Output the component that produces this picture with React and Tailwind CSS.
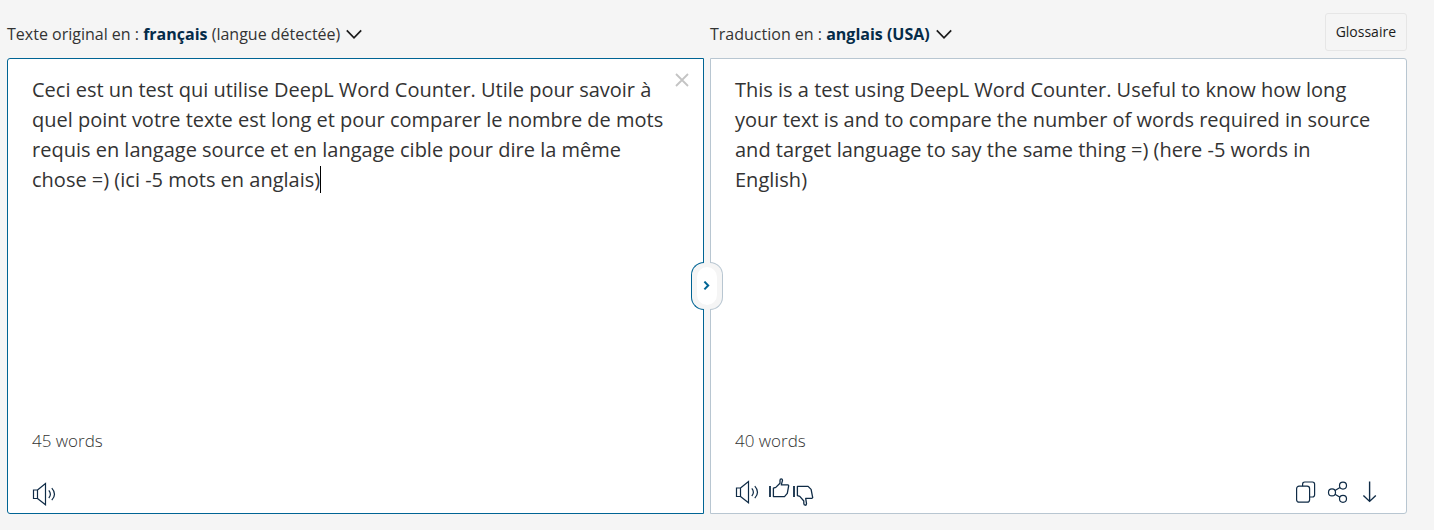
import { useState } from "react";

const SOURCE =
  "Ceci est un test qui utilise DeepL Word Counter. Utile pour savoir à quel point votre texte est long et pour comparer le nombre de mots requis en langage source et en langage cible pour dire la même chose =) (ici -5 mots en anglais)";
const TARGET =
  "This is a test using DeepL Word Counter. Useful to know how long your text is and to compare the number of words required in source and target language to say the same thing =) (here -5 words in English)";

function Icon({ children, className, viewBox = "0 0 24 24" }) {
  return (
    <svg
      className={className}
      viewBox={viewBox}
      fill="none"
      stroke="currentColor"
      strokeWidth="1.2"
      aria-hidden="true"
    >
      {children}
    </svg>
  );
}

function Chevron() {
  return (
    <Icon className="h-4 w-4" viewBox="0 0 16 16">
      <path d="M.8 4.3 8 11.8l7.2-7.5" stroke="#1b1b1b" strokeWidth="1.7" />
    </Icon>
  );
}

function Speaker() {
  return (
    <Icon className="h-6 w-6">
      <path d="M1.5 8h4v8.5h-4zM5.5 8l8-6.4v21.2l-8-6.3" />
      <path d="M16.8 8.4c2 2.4 2 5.2 0 7.6M19.8 6.2c3.4 3.8 3.4 8.2 0 12" />
    </Icon>
  );
}

function ThumbUp() {
  return (
    <Icon className="h-6 w-6 overflow-visible">
      <path d="M3 8v11" strokeWidth="1.8" />
      <path
        d="M6.4 18.6V10.2l2.4-.8 4.2-4.2V2.6c0-2.3 2.4-2.2 2.5-.2l-1.2 4.4h6.6l.8.8-1.4 7.8-2.8 3.2z"
        strokeWidth="1.3"
        strokeLinejoin="round"
      />
    </Icon>
  );
}

function ThumbDown() {
  return (
    <Icon className="h-6 w-6 overflow-visible">
      <path d="M3 6v11" strokeWidth="1.8" />
      <path
        d="M6.4 6.4v9.2l2.4.8 4 4.6v2.4c.2 2.4 2.6 2.4 2.7.2l-.8-5.2h6.2l.8-.8-1.6-8.2-3-3z"
        strokeWidth="1.3"
        strokeLinejoin="round"
      />
    </Icon>
  );
}

function Copy() {
  return (
    <Icon className="h-6 w-6">
      <rect x="2.6" y="6.2" width="13" height="16" rx="2.5" />
      <path d="M8.6 6.2V4.2c0-1.5.8-2.2 2.2-2.2h7.6c1.4 0 2.2.8 2.2 2.2v10.6c0 1.5-.8 2.2-2.2 2.2h-2.8" />
    </Icon>
  );
}

function Share() {
  return (
    <Icon className="h-6 w-6">
      <circle cx="6" cy="12.4" r="3.5" />
      <circle cx="17" cy="5.6" r="3.5" />
      <circle cx="17" cy="18.8" r="3.5" />
      <path d="m9 10.6 5-3.2M9 14.2l5 3" />
    </Icon>
  );
}

function Download() {
  return (
    <Icon className="h-6 w-6">
      <path d="M11.6 1.4v20M5.4 15.4l6.2 6 6.2-6" strokeWidth="1.4" />
    </Icon>
  );
}

function IconButton({ label, className = "", children }) {
  return (
    <button type="button" aria-label={label} className={`text-[#0f2b46] ${className}`}>
      {children}
    </button>
  );
}

function LanguageButton({ prefix, language, suffix }) {
  return (
    <button type="button" className="flex items-center gap-1.5 text-base text-[#333333]">
      <span>
        {prefix} <strong className="font-bold text-[#042b48]">{language}</strong>
        {suffix}
      </span>
      <Chevron />
    </button>
  );
}

const textClass =
  "block h-[362px] w-full resize-none bg-transparent pt-4 pr-8 pl-6 text-xl leading-[30px] text-[#333333] outline-none";

export default function App() {
  const [source, setSource] = useState(SOURCE);
  return (
    <main className="min-h-screen bg-[#f5f5f5] pt-2.5 pr-[27px] pb-4 pl-[7px] font-['Open_Sans',sans-serif]">
      <header className="grid h-12 grid-cols-2 gap-1.5">
        <LanguageButton
          prefix="Texte original en :"
          language="français"
          suffix=" (langue détectée)"
        />
        <div className="flex items-center justify-between">
          <LanguageButton prefix="Traduction en :" language="anglais (USA)" />
          <button
            type="button"
            className="mb-1 h-[38px] rounded-[3px] border border-[#e6e6e6] px-2.5 text-sm text-[#1b1b1b]"
          >
            Glossaire
          </button>
        </div>
      </header>

      <div className="relative grid grid-cols-2 gap-1.5">
        <section className="relative rounded-l-[3px] border border-[#006494] bg-white">
          <textarea
            aria-label="Texte original"
            spellCheck={false}
            value={source}
            onChange={(e) => setSource(e.target.value)}
            className={`${textClass} caret-transparent`}
          />
          {source === SOURCE && (
            <span className="absolute top-[107px] left-[312px] h-[27px] w-px bg-black" />
          )}
          <button
            type="button"
            aria-label="Effacer le texte"
            className="absolute top-[13px] right-[13px] text-[#c4c4c4]"
          >
            <Icon className="h-4 w-4" viewBox="0 0 16 16">
              <path d="m2 2 12 12M14 2 2 14" strokeWidth="1.8" />
            </Icon>
          </button>
          <footer className="px-6 pb-[7px]">
            <p className="h-10 text-[17px] leading-10 font-light text-[#333333]">45 words</p>
            <div className="flex h-[45px] items-end">
              <IconButton label="Écouter le texte original">
                <Speaker />
              </IconButton>
            </div>
          </footer>
        </section>

        <section className="rounded-r-[3px] border border-[#b8c6d1] bg-white">
          <textarea aria-label="Traduction" readOnly value={TARGET} className={textClass} />
          <footer className="px-6 pb-[9px]">
            <p className="h-10 text-[17px] leading-10 font-light text-[#333333]">40 words</p>
            <div className="flex h-[43px] items-end justify-between">
              <div className="flex items-end">
                <IconButton label="Écouter la traduction">
                  <Speaker />
                </IconButton>
                <IconButton label="Bonne traduction" className="ml-2 pb-0.5">
                  <ThumbUp />
                </IconButton>
                <IconButton label="Mauvaise traduction">
                  <ThumbDown />
                </IconButton>
              </div>
              <div className="flex gap-2">
                <IconButton label="Copier">
                  <Copy />
                </IconButton>
                <IconButton label="Partager">
                  <Share />
                </IconButton>
                <IconButton label="Télécharger">
                  <Download />
                </IconButton>
              </div>
            </div>
          </footer>
        </section>

        <button
          type="button"
          aria-label="Intervertir les langues"
          className="absolute top-1/2 left-1/2 flex h-12 w-8 -translate-x-1/2 -translate-y-1/2"
        >
          <span className="h-full w-[13px] rounded-l-[14px] border border-r-0 border-[#006494] bg-[#f5f5f5]" />
          <span className="h-full w-1.5 bg-[#f5f5f5]" />
          <span className="h-full w-[13px] rounded-r-[14px] border border-l-0 border-[#b8c6d1] bg-[#f5f5f5]" />
          <span className="absolute inset-x-1.5 inset-y-[5px] flex items-center justify-center rounded-full bg-white text-[#006494]">
            <Icon className="h-2.5 w-2.5" viewBox="0 0 10 10">
              <path d="m2.4 .6 3.8 3.9-3.8 3.9" strokeWidth="2" />
            </Icon>
          </span>
        </button>
      </div>
    </main>
  );
}
